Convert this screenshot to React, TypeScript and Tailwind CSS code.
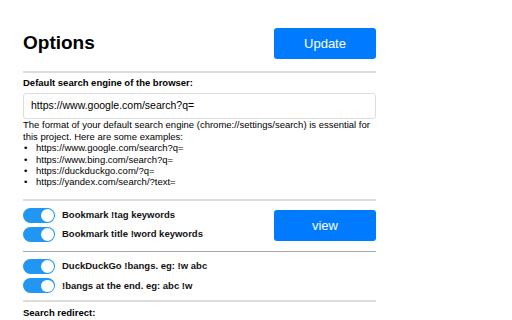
import React from "react";

const examples = [
  "https://www.google.com/search?q=",
  "https://www.bing.com/search?q=",
  "https://duckduckgo.com/?q=",
  "https://yandex.com/search/?text=",
];

function Toggle() {
  return (
    <span className="flex h-[15px] w-[32px] shrink-0 items-center justify-end rounded-full bg-[#2196f3] px-[1.5px]">
      <span className="h-[12.5px] w-[12.5px] rounded-full bg-white" />
    </span>
  );
}

function ToggleRow({ label }: { label: string }) {
  return (
    <label className="flex items-center gap-[7px]">
      <Toggle />
      <span className="text-[9.5px] font-bold text-[#111]">{label}</span>
    </label>
  );
}

export default function App() {
  return (
    <div className="h-[320px] w-[512px] overflow-hidden bg-white font-['Liberation_Sans',Arial,sans-serif] text-black">
      <div className="ml-[23px] w-[353px] pt-[28px]">
        <div className="flex items-center justify-between">
          <h1 className="text-[19px] font-bold">Options</h1>
          <button className="h-[31px] w-[102px] rounded-[3px] bg-[#007bff] text-[13px] text-white">
            Update
          </button>
        </div>

        <div className="mt-[12px] border-t-2 border-[#dcdcdc]" />

        <div className="mt-[3px] text-[9.5px] font-bold">Default search engine of the browser:</div>
        <div className="mt-[3px] flex h-[26px] items-center rounded-[3px] border border-[#dedede] px-[7px] text-[10.5px]">
          https://www.google.com/search?q=
        </div>
        <p className="text-[9.5px] leading-[11.5px]">
          The format of your default search engine (chrome://settings/search) is essential for this
          project. Here are some examples:
        </p>
        <ul className="text-[9.5px] leading-[11.4px]">
          {examples.map((e) => (
            <li key={e} className="flex">
              <span className="w-[13px] pl-[1px]">•</span>
              {e}
            </li>
          ))}
        </ul>

        <div className="mt-[11px] border-t-2 border-[#dcdcdc]" />

        <div className="flex items-center justify-between pt-[7px] pb-[9px]">
          <div className="flex flex-col gap-[4px]">
            <ToggleRow label="Bookmark !tag keywords" />
            <ToggleRow label="Bookmark title !word keywords" />
          </div>
          <button className="mt-[2px] h-[31px] w-[102px] rounded-[3px] bg-[#007bff] text-[13px] text-white">
            view
          </button>
        </div>

        <div className="border-t border-[#a8a8a8]" />

        <div className="flex flex-col gap-[4.5px] pt-[7px] pb-[7px]">
          <ToggleRow label="DuckDuckGo !bangs. eg: !w abc" />
          <ToggleRow label="!bangs at the end. eg: abc !w" />
        </div>

        <div className="border-t-2 border-[#dcdcdc]" />

        <div className="mt-[4px] text-[9.5px] font-bold">Search redirect:</div>
      </div>
    </div>
  );
}
